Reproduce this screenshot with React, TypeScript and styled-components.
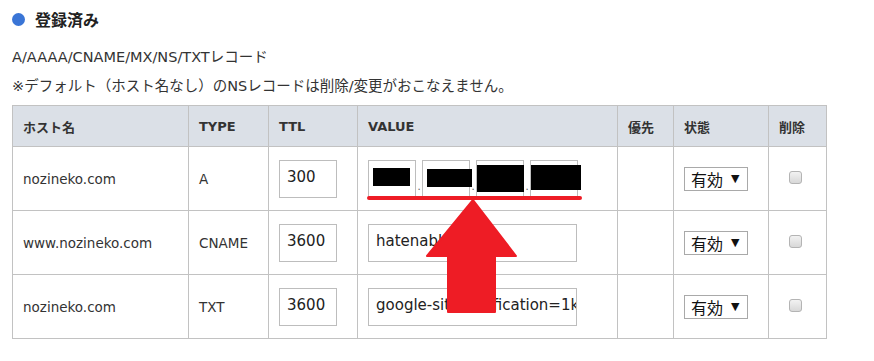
import React from 'react';
import styled, { createGlobalStyle } from 'styled-components';

const GlobalStyle = createGlobalStyle`
  body {
    margin: 0;
    background: #fff;
    font-family: "DejaVu Sans", "Noto Sans CJK JP", sans-serif;
    color: #333;
  }
`;

const Page = styled.div`
  position: relative;
  width: 874px;
  height: 361px;
  padding: 0 0 0 12px;
  box-sizing: border-box;
  overflow: hidden;
`;

const Heading = styled.h2`
  display: flex;
  align-items: center;
  gap: 10px;
  margin: 0;
  padding-top: 9px;
  height: 20px;
  font-size: 16px;
  font-weight: bold;
  color: #222;
  font-family: "Noto Sans CJK JP", sans-serif;
  &::before {
    content: '';
    width: 13px;
    height: 13px;
    border-radius: 50%;
    background: #3a75d6;
  }
`;

const Note = styled.p`
  margin: 0;
  font-size: 14.5px;
  line-height: 29px;
  color: #333;
  font-family: "DejaVu Sans", "Noto Sans CJK JP", sans-serif;
  &:first-of-type {
    margin-top: 14px;
  }
`;

const Table = styled.table`
  margin-top: 4px;
  border-collapse: collapse;
  table-layout: fixed;
  width: 814px;
  font-size: 13.5px;
`;

const Th = styled.th<{ w: number }>`
  width: ${(p) => p.w}px;
  height: 41px;
  padding: 0 0 0 10px;
  box-sizing: border-box;
  text-align: left;
  background: #dbe0e7;
  border: 1px solid #c2c2c2;
  font-weight: bold;
  font-size: 13px;
  color: #333;
  font-family: "DejaVu Sans", "Noto Sans CJK JP", sans-serif;
`;

const Td = styled.td`
  height: 63px;
  padding: 0 0 0 10px;
  border: 1px solid #c2c2c2;
  color: #333;
  white-space: nowrap;
`;

const TextBox = styled.div<{ w: number }>`
  width: ${(p) => p.w}px;
  height: 38px;
  box-sizing: border-box;
  border: 1px solid #bdbdbd;
  padding: 0 0 4px 7px;
  display: flex;
  align-items: center;
  font-size: 15px;
  color: #222;
  overflow: hidden;
  white-space: nowrap;
`;

const IpRow = styled.div`
  display: flex;
  align-items: flex-end;
  gap: 1px;
`;

const Octet = styled.div`
  position: relative;
  width: 48px;
  height: 38px;
  box-sizing: border-box;
  border: 1px solid #bdbdbd;
`;

const Redact = styled.i<{ l: number; t: number; w: number; h: number }>`
  position: absolute;
  left: ${(p) => p.l}px;
  top: ${(p) => p.t}px;
  width: ${(p) => p.w}px;
  height: ${(p) => p.h}px;
  background: #000;
`;

const Dot = styled.span`
  font-size: 10px;
  line-height: 14px;
  color: #555;
  width: 4px;
  text-align: center;
  padding-bottom: 4px;
`;

const Select = styled.div`
  display: inline-flex;
  align-items: center;
  gap: 8px;
  width: 64px;
  height: 24px;
  box-sizing: border-box;
  border: 1px solid #a9a9a9;
  padding: 0 0 0 6px;
  font-size: 16px;
  color: #111;
  font-family: "Noto Sans CJK JP", sans-serif;
  span {
    font-size: 11px;
    font-family: "DejaVu Sans", sans-serif;
  }
`;

const Check = styled.div`
  width: 13px;
  height: 13px;
  margin-left: 10px;
  margin-top: -2px;
  box-sizing: border-box;
  border: 1px solid #b4b4b4;
  border-radius: 3px;
  background: linear-gradient(#f2f2f2, #d8d8d8);
`;

const Underline = styled.div`
  position: absolute;
  left: 367px;
  top: 196px;
  width: 215px;
  height: 4px;
  border-radius: 2px;
  background: #ee1c25;
`;

const Arrow = styled.svg`
  position: absolute;
  left: 426px;
  top: 199px;
`;

const cols: [string, number][] = [
  ['ホスト名', 176],
  ['TYPE', 80],
  ['TTL', 89],
  ['VALUE', 260],
  ['優先', 56],
  ['状態', 95],
  ['削除', 58],
];

const rows = [
  { host: 'nozineko.com', type: 'A', ttl: '300', value: null },
  { host: 'www.nozineko.com', type: 'CNAME', ttl: '3600', value: 'hatenablog.com' },
  { host: 'nozineko.com', type: 'TXT', ttl: '3600', value: 'google-site-verification=1k' },
];

const redactions = [
  { l: 4, t: 7, w: 37, h: 18 },
  { l: 4, t: 8, w: 45, h: 18 },
  { l: 0, t: 4, w: 47, h: 27 },
  { l: 0, t: 4, w: 50, h: 25 },
];

export default function App() {
  return (
    <Page>
      <GlobalStyle />
      <Heading>登録済み</Heading>
      <Note>A/AAAA/CNAME/MX/NS/TXTレコード</Note>
      <Note>※デフォルト（ホスト名なし）のNSレコードは削除/変更がおこなえません。</Note>
      <Table>
        <thead>
          <tr>
            {cols.map(([label, w]) => (
              <Th key={label} w={w}>
                {label}
              </Th>
            ))}
          </tr>
        </thead>
        <tbody>
          {rows.map((r, i) => (
            <tr key={i}>
              <Td>{r.host}</Td>
              <Td>{r.type}</Td>
              <Td>
                <TextBox w={58}>{r.ttl}</TextBox>
              </Td>
              <Td>
                {r.value === null ? (
                  <IpRow>
                    {redactions.map((rd, j) => (
                      <React.Fragment key={j}>
                        {j > 0 && <Dot>.</Dot>}
                        <Octet>
                          <Redact {...rd} />
                        </Octet>
                      </React.Fragment>
                    ))}
                  </IpRow>
                ) : (
                  <TextBox w={209}>{r.value}</TextBox>
                )}
              </Td>
              <Td />
              <Td>
                <Select>
                  有効<span>▼</span>
                </Select>
              </Td>
              <Td>
                <Check />
              </Td>
            </tr>
          ))}
        </tbody>
      </Table>
      <Underline />
      <Arrow width="92" height="114" viewBox="0 0 92 114">
        <polygon points="47,1 1,57 22,57 22,113 69,113 69,57 90,57" fill="#ee1c25" strokeLinejoin="round" stroke="#ee1c25" strokeWidth="2" />
      </Arrow>
    </Page>
  );
}
